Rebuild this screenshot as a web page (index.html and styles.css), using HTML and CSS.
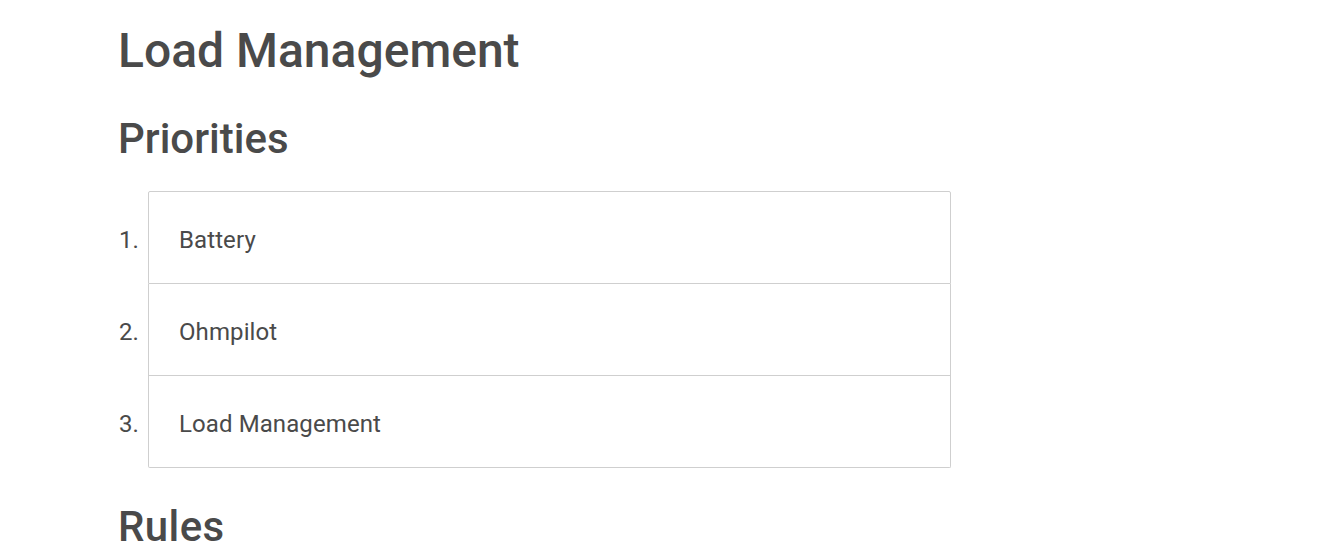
FILE: index.html
```html
<!DOCTYPE html>
<html>
<head>
<meta charset="utf-8">
<link rel="stylesheet" href="styles.css">
</head>
<body>
<main class="page">
  <h1 class="title">Load Management</h1>
  <h2 class="section-title">Priorities</h2>
  <ol class="priorities">
    <li class="prio"><span class="prio-num">1.</span><div class="prio-item">Battery</div></li>
    <li class="prio"><span class="prio-num">2.</span><div class="prio-item">Ohmpilot</div></li>
    <li class="prio"><span class="prio-num">3.</span><div class="prio-item">Load Management</div></li>
  </ol>
  <h2 class="section-title rules">Rules</h2>
</main>
</body>
</html>
```

FILE: styles.css
```css
html, body {
  margin: 0;
  padding: 0;
  background: #fff;
}
body {
  font-family: Roboto, "Noto Sans", sans-serif;
  color: #4a4a4a;
}
.page {
  padding: 0 0 0 118px;
  width: 833px;
}
.title {
  margin: 0;
  padding-top: 23px;
  font-size: 48px;
  line-height: 56px;
  font-weight: 500;
}
.section-title {
  margin: 0;
  padding-top: 36px;
  font-size: 42px;
  line-height: 48px;
  font-weight: 500;
}
.priorities {
  list-style: none;
  margin: 28px 0 0;
  padding: 0;
}
.prio {
  display: flex;
  align-items: baseline;
  font-size: 24px;
}
.prio-num {
  width: 30px;
  flex: none;
  padding-left: 1px;
  box-sizing: border-box;
}
.prio-item {
  flex: 1;
  height: 92px;
  box-sizing: border-box;
  display: flex;
  align-items: center;
  padding: 4px 0 0 30px;
  letter-spacing: 0.1px;
  border-left: 1px solid #cfcfcf;
  border-right: 1px solid #cfcfcf;
  border-bottom: 1px solid #cfcfcf;
}
.prio:first-child .prio-item {
  height: 93px;
  border-top: 1px solid #cfcfcf;
  border-radius: 2px 2px 0 0;
}
.prio:last-child .prio-item {
  border-radius: 0 0 2px 2px;
}
.rules {
  padding-top: 35px;
  letter-spacing: 0.4px;
}
```
